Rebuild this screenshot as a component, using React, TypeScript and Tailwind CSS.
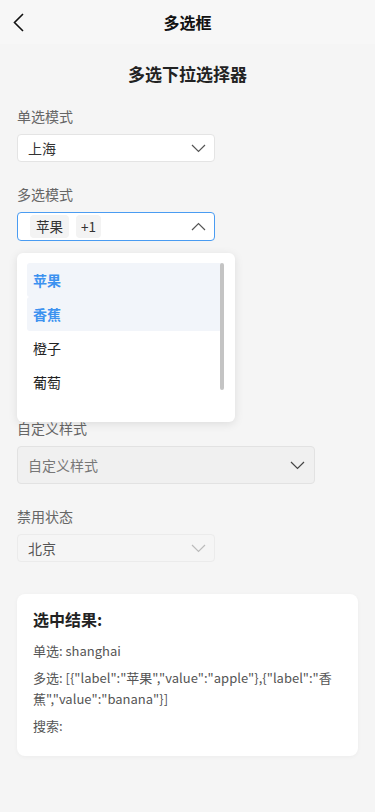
import React from "react";

const font = { fontFamily: '"Noto Sans CJK SC", "Noto Sans", sans-serif' };

function ChevronDown({ color = "#555" }: { color?: string }) {
  return (
    <svg width="15" height="9" viewBox="0 0 15 9" fill="none">
      <polyline points="1,1 7.5,7.5 14,1" stroke={color} strokeWidth="1.2" strokeLinejoin="miter" />
    </svg>
  );
}

function ChevronUp({ color = "#555" }: { color?: string }) {
  return (
    <svg width="15" height="9" viewBox="0 0 15 9" fill="none">
      <polyline points="1,8 7.5,1.5 14,8" stroke={color} strokeWidth="1.2" />
    </svg>
  );
}

function Label({ children }: { children: React.ReactNode }) {
  return <div className="h-[20px] leading-[20px] text-[14px] text-[#666] mb-[8px]">{children}</div>;
}

export default function App() {
  return (
    <div className="min-h-[812px] bg-[#f5f5f5] text-[#333]" style={font}>
      <div className="h-[44px] bg-[#f7f7f7] relative flex items-center justify-center">
        <svg className="absolute left-[12px] top-[12px]" width="14" height="21" viewBox="0 0 14 21" fill="none">
          <polyline points="11,2 2.5,10.5 11,19" stroke="#111" strokeWidth="1.6" />
        </svg>
        <div className="text-[16px] font-bold text-[#111]">多选框</div>
      </div>

      <div className="px-[17px]">
        <div className="mt-[16px] h-[28px] leading-[28px] text-center text-[17px] font-bold text-[#222]">多选下拉选择器</div>

        <div className="mt-[18px]">
          <Label>单选模式</Label>
          <div className="w-[198px] h-[28px] bg-white border border-[#e4e4e4] rounded-[4px] flex items-center justify-between pl-[10px] pr-[8px]">
            <span className="text-[14px] text-[#333]">上海</span>
            <ChevronDown />
          </div>
        </div>

        <div className="mt-[22px]">
          <Label>多选模式</Label>
          <div className="relative z-10">
            <div className="w-[198px] h-[29px] bg-white border border-[#4a9cf2] rounded-[4px] flex items-center justify-between pl-[12px] pr-[8px]">
              <div className="flex items-center gap-[7px]">
                <span className="h-[23px] leading-[23px] px-[6px] rounded-[4px] bg-[#f3f3f3] text-[13.5px] text-[#333]">苹果</span>
                <span className="h-[23px] leading-[23px] px-[5px] rounded-[4px] bg-[#f3f3f3] text-[13.5px] text-[#333]">+1</span>
              </div>
              <ChevronUp />
            </div>
            <div className="absolute left-0 top-[41px] w-[218px] h-[169px] bg-white rounded-[6px] shadow-[0_2px_10px_rgba(0,0,0,0.10)] overflow-hidden">
              <div className="mt-[10px] ml-[10px] mr-[13px] h-[148px] overflow-hidden">
                <div className="h-[34px] flex items-center px-[6px] rounded-[3px] bg-[#f2f5fa] text-[14px] font-semibold text-[#3d92f0]">苹果</div>
                <div className="h-[34px] flex items-center px-[6px] rounded-[3px] bg-[#f2f5fa] text-[14px] font-semibold text-[#3d92f0]">香蕉</div>
                <div className="h-[34px] flex items-center px-[6px] text-[14px] text-[#222]">橙子</div>
                <div className="h-[34px] flex items-center px-[6px] text-[14px] text-[#222]">葡萄</div>
                <div className="h-[34px] flex items-center px-[6px] text-[14px] text-[#222]">西瓜</div>
              </div>
              <div className="absolute right-[11px] top-[10px] w-[4px] h-[127px] rounded-[2px] bg-[#c4c4c4]" />
            </div>
          </div>
        </div>

        <div className="mt-[22px] h-[133px]">
          <Label>搜索模式</Label>
          <div className="w-[198px] h-[28px] bg-white border border-[#e4e4e4] rounded-[4px]" />
        </div>

        <div className="mt-[22px]">
          <Label>自定义样式</Label>
          <div className="w-[298px] h-[38px] bg-[#f0f0f0] border border-[#e2e2e2] rounded-[4px] flex items-center justify-between pl-[10px] pr-[9px]">
            <span className="text-[14px] text-[#777]">自定义样式</span>
            <ChevronDown color="#444" />
          </div>
        </div>

        <div className="mt-[22px]">
          <Label>禁用状态</Label>
          <div className="w-[198px] h-[28px] bg-[#f5f5f5] border border-[#ebebeb] rounded-[4px] flex items-center justify-between pl-[10px] pr-[8px]">
            <span className="text-[14px] text-[#555]">北京</span>
            <ChevronDown color="#bbb" />
          </div>
        </div>

        <div className="mt-[32px] w-[341px] bg-white rounded-[8px] shadow-[0_1px_4px_rgba(0,0,0,0.04)] pt-[13px] pb-[20px] px-[16px]">
          <div className="h-[24px] leading-[24px] text-[16px] font-bold text-[#222]">选中结果:</div>
          <div className="mt-[9px] text-[13px] leading-[21px] text-[#555] break-all">
            <p className="mb-[6px]">单选: shanghai</p>
            <p className="mb-[6px]">多选: [{'{'}"label":"苹果","value":"apple"{'}'},{'{'}"label":"香蕉","value":"banana"{'}'}]</p>
            <p>搜索:</p>
          </div>
        </div>
      </div>
    </div>
  );
}
